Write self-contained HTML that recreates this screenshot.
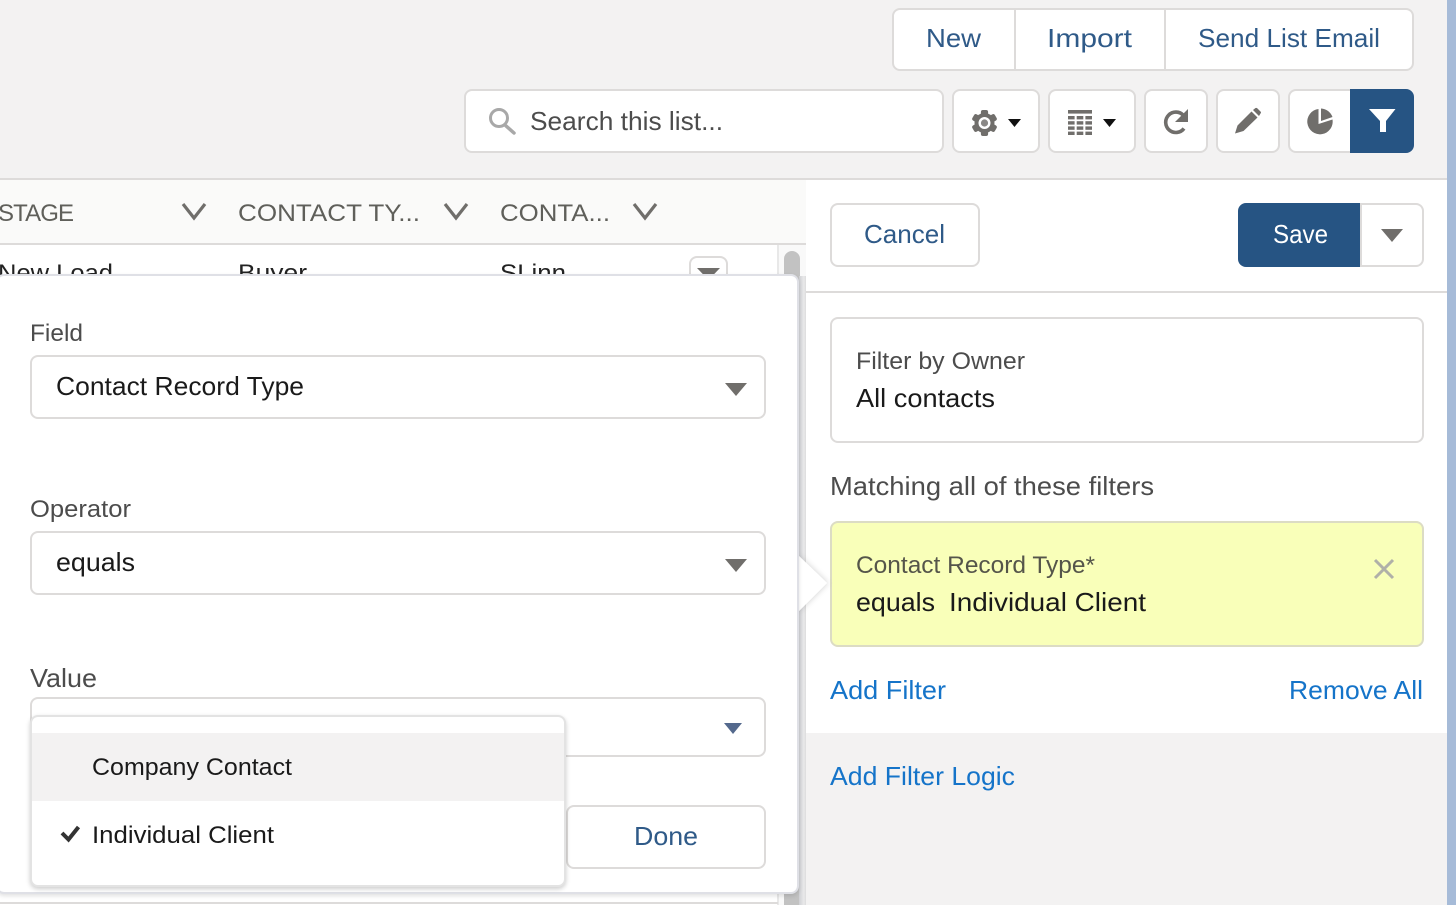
<!DOCTYPE html>
<html>
<head>
<meta charset="utf-8">
<style>
html,body{margin:0;padding:0;width:1456px;height:905px;overflow:hidden;background:#f3f2f2}
#p{position:relative;width:1456px;height:905px;overflow:hidden}
.b{position:absolute;box-sizing:border-box;background:#fff;border:2px solid #dddbda;border-radius:8px}
.r{position:absolute;box-sizing:border-box}
svg{position:absolute;left:0;top:0}
text{font-family:"Liberation Sans",sans-serif;white-space:pre}
.f26{font-size:26px}.f24{font-size:24px}
.bl{fill:#2f5a88}.dk{fill:#1a1a1a}.gr{fill:#4c4c4c}.ln{fill:#1574c9}
</style>
</head>
<body>
<div id="p">
  <!-- table -->
  <div class="r" style="left:0;top:178px;width:806px;height:2px;background:#dddbda"></div>
  <div class="r" style="left:806px;top:178px;width:642px;height:2px;background:#dddbda"></div>
  <div class="r" style="left:0;top:180px;width:806px;height:65px;background:#fafaf9;border-bottom:2px solid #dddbda"></div>
  <div class="r" style="left:0;top:245px;width:806px;height:660px;background:#fff"></div>
  <div class="r" style="left:779px;top:245px;width:27px;height:660px;background:#f9f9f9"></div>
  <div class="r" style="left:777px;top:245px;width:2px;height:660px;background:#e8e8e8"></div>
  <div class="r" style="left:784px;top:251px;width:16px;height:654px;border-radius:8px 8px 0 0;background:#c2c2c2"></div>
  <div class="r" style="left:0;top:902px;width:778px;height:2px;background:#dddbda"></div>
  <div class="b" style="left:689px;top:256px;width:39px;height:40px"></div>
  <svg width="1456" height="905">
    <text class="f24" x="-2" y="281" fill="#222" textLength="115" lengthAdjust="spacingAndGlyphs">New Load</text>
    <text class="f24" x="238" y="281" fill="#222" textLength="69" lengthAdjust="spacingAndGlyphs">Buyer</text>
    <text class="f24" x="500" y="281" fill="#222" textLength="66" lengthAdjust="spacingAndGlyphs">SLinn</text>
    <polygon points="697,268 720,268 708.5,280" fill="#706e6b"/>
  </svg>

  <!-- right panel -->
  <div class="r" style="left:799px;top:276px;width:7px;height:629px;background:linear-gradient(90deg,#cfd0d4,#e9e9ea 70%,#dcdcdc)"></div>
  <div class="r" style="left:806px;top:180px;width:642px;height:553px;background:#fff"></div>
  <div class="r" style="left:806px;top:733px;width:642px;height:172px;background:#f3f2f2"></div>
  <div class="r" style="left:806px;top:291px;width:642px;height:2px;background:#dddbda"></div>
  <div class="r" style="left:1447px;top:0;width:9px;height:905px;background:#a6bbd8"></div>

  <!-- top buttons -->
  <div class="b" style="left:892px;top:8px;width:522px;height:63px"></div>
  <div class="r" style="left:1014px;top:8px;width:2px;height:63px;background:#dddbda"></div>
  <div class="r" style="left:1164px;top:8px;width:2px;height:63px;background:#dddbda"></div>
  <div class="b" style="left:464px;top:89px;width:480px;height:64px"></div>
  <div class="b" style="left:952px;top:89px;width:88px;height:64px"></div>
  <div class="b" style="left:1048px;top:89px;width:88px;height:64px"></div>
  <div class="b" style="left:1144px;top:89px;width:64px;height:64px"></div>
  <div class="b" style="left:1216px;top:89px;width:64px;height:64px"></div>
  <div class="b" style="left:1288px;top:89px;width:70px;height:64px"></div>
  <div class="r" style="left:1350px;top:89px;width:64px;height:64px;background:#265483;border-radius:0 8px 8px 0"></div>

  <!-- panel boxes -->
  <div class="b" style="left:830px;top:203px;width:150px;height:64px"></div>
  <div class="r" style="left:1238px;top:203px;width:122px;height:64px;background:#265483;border-radius:8px 0 0 8px"></div>
  <div class="b" style="left:1360px;top:203px;width:64px;height:64px;border-radius:0 8px 8px 0"></div>
  <div class="b" style="left:830px;top:317px;width:594px;height:126px"></div>
  <div class="b" style="left:830px;top:521px;width:594px;height:126px;background:#f9ffb9;border-color:#dcdcc4"></div>

  <!-- popover -->
  <svg width="1456" height="905">
    <defs><filter id="s" x="-50%" y="-50%" width="200%" height="200%"><feDropShadow dx="1" dy="0" stdDeviation="3" flood-color="#000" flood-opacity=".16"/></filter></defs>
    <polygon points="798,555 827,583 798,612" fill="#fff" filter="url(#s)"/>
    <polygon points="790,550 798,555 804,561 827,583 804,606 798,612 790,618" fill="#fff"/>
  </svg>
  <div class="r" style="left:-4px;top:274px;width:803px;height:620px;background:#fff;border:2px solid #dfe0e6;border-radius:8px;box-shadow:0 2px 4px rgba(0,0,0,.12)"></div>
  <div class="b" style="left:30px;top:355px;width:736px;height:64px"></div>
  <div class="b" style="left:30px;top:531px;width:736px;height:64px"></div>
  <div class="b" style="left:30px;top:697px;width:736px;height:60px"></div>
  <div class="b" style="left:566px;top:805px;width:200px;height:64px"></div>
  <div class="r" style="left:30px;top:715px;width:536px;height:172px;background:#fff;border:2px solid #e3e3e3;border-radius:8px;box-shadow:0 2px 5px rgba(0,0,0,.2)"></div>
  <div class="r" style="left:32px;top:733px;width:532px;height:68px;background:#f3f2f2"></div>

  <!-- text & icons overlay -->
  <svg width="1456" height="905">
    <text class="f26 bl" x="926" y="47" textLength="55" lengthAdjust="spacingAndGlyphs">New</text>
    <text class="f26 bl" x="1047" y="47" textLength="85" lengthAdjust="spacingAndGlyphs">Import</text>
    <text class="f26 bl" x="1198" y="47" textLength="182" lengthAdjust="spacingAndGlyphs">Send List Email</text>
    <text class="f26 gr" x="530" y="130" textLength="193" lengthAdjust="spacingAndGlyphs">Search this list...</text>

    <text class="f24" fill="#5f5f5a" x="-2" y="221" textLength="76" lengthAdjust="spacing">STAGE</text>
    <text class="f24" fill="#5f5f5a" x="238" y="221" textLength="182" lengthAdjust="spacingAndGlyphs">CONTACT TY...</text>
    <text class="f24" fill="#5f5f5a" x="500" y="221" textLength="110" lengthAdjust="spacingAndGlyphs">CONTA...</text>

    <text class="f26 bl" x="864" y="243" textLength="81" lengthAdjust="spacingAndGlyphs">Cancel</text>
    <text class="f26" fill="#fff" x="1273" y="243" textLength="55" lengthAdjust="spacingAndGlyphs">Save</text>

    <text class="f24 gr" x="30" y="341" textLength="53" lengthAdjust="spacingAndGlyphs">Field</text>
    <text class="f26 dk" x="56" y="395" textLength="248" lengthAdjust="spacingAndGlyphs">Contact Record Type</text>
    <text class="f24 gr" x="30" y="517" textLength="101" lengthAdjust="spacingAndGlyphs">Operator</text>
    <text class="f26 dk" x="56" y="571" textLength="79" lengthAdjust="spacingAndGlyphs">equals</text>
    <text class="f26 gr" x="30" y="687" textLength="67" lengthAdjust="spacingAndGlyphs">Value</text>
    <text class="f24 dk" x="92" y="775" textLength="200" lengthAdjust="spacingAndGlyphs">Company Contact</text>
    <text class="f24 dk" x="92" y="843" textLength="182" lengthAdjust="spacingAndGlyphs">Individual Client</text>
    <text class="f26 bl" x="634" y="845" textLength="64" lengthAdjust="spacingAndGlyphs">Done</text>

    <text class="f24 gr" x="856" y="369" textLength="169" lengthAdjust="spacingAndGlyphs">Filter by Owner</text>
    <text class="f26 dk" x="856" y="407" textLength="139" lengthAdjust="spacingAndGlyphs">All contacts</text>
    <text class="f26 gr" x="830" y="495" textLength="324" lengthAdjust="spacingAndGlyphs">Matching all of these filters</text>
    <text class="f24" fill="#55554a" x="856" y="573" textLength="239" lengthAdjust="spacingAndGlyphs">Contact Record Type*</text>
    <text class="f26 dk" x="856" y="611" textLength="79" lengthAdjust="spacingAndGlyphs">equals</text>
    <text class="f26 dk" x="949" y="611" textLength="197" lengthAdjust="spacingAndGlyphs">Individual Client</text>
    <text class="f26 ln" x="830" y="699" textLength="116" lengthAdjust="spacingAndGlyphs">Add Filter</text>
    <text class="f26 ln" x="1289" y="699" textLength="134" lengthAdjust="spacingAndGlyphs">Remove All</text>
    <text class="f26 ln" x="830" y="785" textLength="185" lengthAdjust="spacingAndGlyphs">Add Filter Logic</text>

    <!-- search -->
    <circle cx="499" cy="118" r="8.5" fill="none" stroke="#a8a8a8" stroke-width="3"/>
    <path d="M505 125 L514 133" stroke="#a8a8a8" stroke-width="3.5" stroke-linecap="round"/>

    <!-- gear -->
    <g transform="translate(984.5 123)" fill="#706e6b">
      <circle r="10"/>
      <rect x="-3.6" y="-13" width="7.2" height="26" rx="2"/>
      <rect x="-3.6" y="-13" width="7.2" height="26" rx="2" transform="rotate(60)"/>
      <rect x="-3.6" y="-13" width="7.2" height="26" rx="2" transform="rotate(120)"/>
      <circle r="6" fill="#fff"/><circle r="3.6" fill="#8a8886"/>
    </g>
    <polygon points="1008,119 1021,119 1014.5,127" fill="#111"/>

    <!-- grid -->
    <g fill="#706e6b">
      <rect x="1068" y="110" width="24" height="3.6"/>
      <rect x="1068" y="116" width="6.6" height="3.4"/><rect x="1076.7" y="116" width="6.6" height="3.4"/><rect x="1085.4" y="116" width="6.6" height="3.4"/>
      <rect x="1068" y="121.2" width="6.6" height="3.4"/><rect x="1076.7" y="121.2" width="6.6" height="3.4"/><rect x="1085.4" y="121.2" width="6.6" height="3.4"/>
      <rect x="1068" y="126.4" width="6.6" height="3.4"/><rect x="1076.7" y="126.4" width="6.6" height="3.4"/><rect x="1085.4" y="126.4" width="6.6" height="3.4"/>
      <rect x="1068" y="131.6" width="6.6" height="3.4"/><rect x="1076.7" y="131.6" width="6.6" height="3.4"/><rect x="1085.4" y="131.6" width="6.6" height="3.4"/>
    </g>
    <polygon points="1103,119 1116,119 1109.5,127" fill="#111"/>

    <!-- refresh -->
    <path d="M1183.5 115.5 A10.2 10.2 0 1 0 1184 128.5" fill="none" stroke="#706e6b" stroke-width="3.6"/>
    <polygon points="1188,109 1188,122 1175,122" fill="#706e6b"/>

    <!-- pencil -->
    <path d="M1235 133.5 L1237.5 125.5 L1251.5 111.5 L1257.5 117.5 L1243.5 131 Z" fill="#706e6b"/>
    <path d="M1253 110 L1255.5 108 Q1256.5 107.5 1257.5 108.5 L1260.5 111.5 Q1261.5 112.5 1260.5 113.5 L1259 116 Z" fill="#706e6b"/>

    <!-- pie -->
    <path d="M1318.5 109 V124 L1332.5 119.5 A12.7 12.7 0 1 1 1318.5 109 Z" fill="#706e6b"/>
    <path d="M1321 108.5 A13 13 0 0 1 1332.5 117 L1321 121 Z" fill="#706e6b"/>

    <!-- filter -->
    <path d="M1369 109 H1395.5 L1386 121 V132 H1380 V121 Z" fill="#fff"/>

    <!-- header chevrons -->
    <g fill="none" stroke="#706e6b" stroke-width="3.2">
      <path d="M183 204 L194 218 L205 204"/>
      <path d="M445 204 L456 218 L467 204"/>
      <path d="M634 204 L645 218 L656 204"/>
    </g>

    <!-- carets -->
    <polygon points="1381,229 1403,229 1392,242" fill="#706e6b"/>
    <polygon points="725,383 747,383 736,396" fill="#706e6b"/>
    <polygon points="725,559 747,559 736,572" fill="#706e6b"/>
    <polygon points="724,723 742,723 733,734" fill="#54698d"/>

    <!-- close -->
    <path d="M1375 560 L1393 578 M1393 560 L1375 578" stroke="#b0b0a8" stroke-width="3"/>

    <!-- check -->
    <path d="M62 833 L68.5 839.5 L78.5 827" fill="none" stroke="#333" stroke-width="4"/>
  </svg>
</div>
</body>
</html>
